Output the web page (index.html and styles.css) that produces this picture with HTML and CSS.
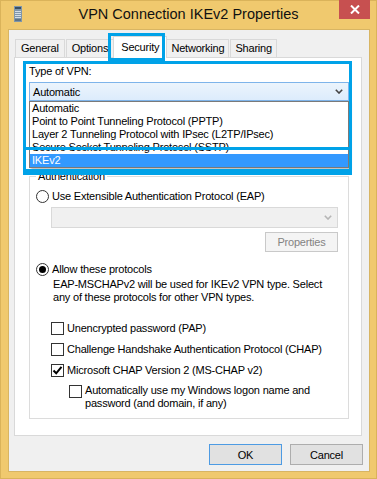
FILE: index.html
```html
<!DOCTYPE html>
<html>
<head>
  <title>VPN Connection IKEv2 Properties</title>
  <link rel="stylesheet" href="styles.css">
</head>
<body>
  <div class="window">
    <div class="titlebar">
      <svg class="app-icon" viewBox="0 0 8 16">
        <rect x="0" y="0" width="8" height="16" fill="#7f96ab"/>
        <rect x="1" y="1" width="6" height="2" fill="#3a4f63"/>
        <rect x="1" y="5" width="6" height="1" fill="#d3dde7"/>
        <rect x="1" y="7" width="6" height="1" fill="#d3dde7"/>
        <rect x="1" y="9" width="6" height="1" fill="#d3dde7"/>
        <rect x="1" y="11" width="6" height="1" fill="#d3dde7"/>
        <rect x="1" y="13" width="6" height="2" fill="#5d7388"/>
      </svg>
      <div class="title">VPN Connection IKEv2 Properties</div>
      <div class="close">
        <svg width="10" height="9" viewBox="0 0 10 9">
          <path d="M1 0.5L9 8.5M9 0.5L1 8.5" stroke="#fff" stroke-width="2"/>
        </svg>
      </div>
    </div>

    <div class="client">
      <div class="tabs">
        <div class="tab">General</div>
        <div class="tab">Options</div>
        <div class="tab active">Security</div>
        <div class="tab">Networking</div>
        <div class="tab">Sharing</div>
      </div>
      <div class="mark mark-tab"></div>

      <div class="panel">
        <div class="label">Type of VPN:</div>
        <div class="combo open">
          <span>Automatic</span>
          <svg class="chevron" width="8" height="5" viewBox="0 0 8 5">
            <path d="M0.8 0.8L4 4L7.2 0.8" fill="none" stroke="#444" stroke-width="1.6"/>
          </svg>
          <ul class="droplist">
            <li>Automatic</li>
            <li>Point to Point Tunneling Protocol (PPTP)</li>
            <li>Layer 2 Tunneling Protocol with IPsec (L2TP/IPsec)</li>
            <li>Secure Socket Tunneling Protocol (SSTP)</li>
            <li class="selected">IKEv2</li>
          </ul>
        </div>

        <fieldset class="group">
          <legend>Authentication</legend>
          <div class="group-body">
            <div class="opt">
              <span class="radio"></span>
              Use Extensible Authentication Protocol (EAP)
            </div>
            <div class="combo disabled">
              <span></span>
              <svg class="chevron" width="8" height="5" viewBox="0 0 8 5">
                <path d="M0.8 0.8L4 4L7.2 0.8" fill="none" stroke="#b5b5b5" stroke-width="1.6"/>
              </svg>
            </div>
            <div class="button disabled props">Properties</div>

            <div class="opt allow">
              <span class="radio checked"></span>
              Allow these protocols
            </div>
            <div class="note">
              EAP-MSCHAPv2 will be used for IKEv2 VPN type. Select<br>
              any of these protocols for other VPN types.
            </div>

            <div class="checks">
              <div class="opt">
                <span class="check"></span>
                Unencrypted password (PAP)
              </div>
              <div class="opt">
                <span class="check"></span>
                Challenge Handshake Authentication Protocol (CHAP)
              </div>
              <div class="opt">
                <span class="check">
                  <svg width="11" height="11" viewBox="0 0 11 11">
                    <path d="M1.5 5.5L4.2 8.3L9.5 1.8" fill="none" stroke="#000" stroke-width="2"/>
                  </svg>
                </span>
                Microsoft CHAP Version 2 (MS-CHAP v2)
              </div>
              <div class="opt sub">
                <span class="check"></span>
                <div>Automatically use my Windows logon name and<br>password (and domain, if any)</div>
              </div>
            </div>
          </div>
        </fieldset>

        <div class="mark mark-vpn"></div>
        <div class="mark mark-ikev2"></div>
      </div>

      <div class="buttons">
        <div class="button default">OK</div>
        <div class="button">Cancel</div>
      </div>
    </div>
  </div>
</body>
</html>
```

FILE: styles.css
```css
* {
  box-sizing: border-box;
}

body {
  margin: 0;
  font-family: "Liberation Sans", Arial, sans-serif;
  font-size: 11px;
  letter-spacing: -0.2px;
  color: #000;
}

.window {
  width: 377px;
  height: 479px;
  background: #f0c96e;
  border: 1px solid #dab35a;
  display: flex;
  flex-direction: column;
}

.titlebar {
  height: 28px;
  display: grid;
  grid-template-columns: 1fr auto 1fr;
  align-items: start;
}

.app-icon {
  width: 8px;
  height: 16px;
  margin: 5px 0 0 13px;
}

.title {
  font-size: 14.5px;
  letter-spacing: 0;
  line-height: 26px;
  color: #111;
}

.close {
  justify-self: end;
  width: 31px;
  height: 19px;
  margin: -1px 6px 0 0;
  background: #c75050;
  display: flex;
  align-items: center;
  justify-content: center;
}

.client {
  position: relative;
  margin: 0 6px 0 7px;
  height: 443px;
  background: #f0f0f0;
  border: 1px solid #d8b563;
  padding: 0 6px 0 5px;
}

/* tabs */
.tabs {
  display: flex;
  align-items: flex-end;
  height: 22px;
  margin: 6px 0 -1px 1px;
  position: relative;
  z-index: 1;
}

.tab {
  height: 18px;
  margin-bottom: 1px;
  padding: 0 5px;
  border: 1px solid #d9d9d9;
  border-bottom: none;
  background: #f0f0f0;
  line-height: 17px;
  margin-right: 1px;
}

.tab:nth-child(n+4) {
  padding: 0 4px;
}

.tab.active {
  height: 22px;
  margin: 0 -1px 0 -2px;
  padding: 0 7px;
  background: #fff;
  line-height: 20px;
  position: relative;
}

.panel {
  position: relative;
  width: 348px;
  height: 379px;
  background: #fff;
  border: 1px solid #d9d9d9;
  padding: 7px 12px 0 14px;
}

.label {
  line-height: 13px;
}

.combo {
  position: relative;
  display: flex;
  align-items: center;
  justify-content: space-between;
  height: 19px;
  margin-top: 4px;
  padding: 0 5px 0 3px;
  border: 1px solid #7eb4ea;
  background: linear-gradient(#ecf4fc, #dcecfc);
}

.droplist {
  position: absolute;
  left: -1px;
  right: -1px;
  top: calc(100% + 1px);
  margin: 0;
  padding: 0;
  list-style: none;
  background: #fff;
  border: 1px solid #7a7a7a;
  box-shadow: 2px 2px 2px rgba(0, 0, 0, 0.25);
}

.droplist li {
  height: 13px;
  line-height: 13px;
  padding-left: 2px;
  white-space: nowrap;
}

.droplist li.selected {
  background: #3399ff;
  color: #fff;
}

/* authentication group */
.group {
  width: 320px;
  margin: 69px 0 0;
  padding: 6px 10px 8px 6px;
  border: 1px solid #dcdcdc;
  min-width: 0;
}

.group legend {
  padding: 0 2px;
  line-height: 13px;
}

.group-body {
  display: flex;
  flex-direction: column;
}

.opt {
  display: flex;
  align-items: center;
  height: 14px;
  line-height: 13px;
  white-space: nowrap;
}

.radio {
  width: 13px;
  height: 13px;
  margin-right: 3px;
  border: 1px solid #333;
  border-radius: 50%;
  background: #fff;
  display: flex;
  align-items: center;
  justify-content: center;
  flex-shrink: 0;
}

.radio.checked::after {
  content: "";
  width: 7px;
  height: 7px;
  border-radius: 50%;
  background: #000;
}

.check {
  width: 13px;
  height: 13px;
  margin-right: 3px;
  border: 1px solid #333;
  background: #fff;
  display: flex;
  align-items: center;
  justify-content: center;
  flex-shrink: 0;
}

.combo.disabled {
  height: 21px;
  margin: 4px 0 0 15px;
  border-color: #d9d9d9;
  background: #f0f0f0;
}

.button {
  width: 73px;
  height: 21px;
  border: 1px solid #adadad;
  background: #e1e1e1;
  display: flex;
  align-items: center;
  justify-content: center;
}

.button.default {
  border-color: #4d9be3;
}

.button.disabled {
  border-color: #c9c9c9;
  background: #f4f4f4;
  color: #838383;
}

.props {
  align-self: flex-end;
  height: 20px;
  margin-top: 4px;
}

.allow {
  margin-top: 10px;
}

.note {
  margin-top: 2px;
  padding-left: 17px;
  line-height: 13px;
}

.checks {
  display: flex;
  flex-direction: column;
  gap: 7px;
  margin-top: 17px;
  padding-left: 15px;
}

.opt.sub {
  height: auto;
  align-items: flex-start;
  padding-left: 18px;
}

.opt.sub .check {
  margin-top: 1px;
}

.buttons {
  display: flex;
  justify-content: flex-end;
  gap: 8px;
  margin-top: 8px;
}

/* blue annotation boxes */
.mark {
  position: absolute;
  border: 3px solid #00a2e8;
  z-index: 2;
}

.mark-tab {
  left: 99px;
  top: 3px;
  width: 57px;
  height: 28px;
}

.mark-vpn {
  left: 8px;
  top: 3px;
  width: 329px;
  height: 114px;
}

.mark-ikev2 {
  left: 8px;
  top: 89px;
  width: 329px;
  height: 25px;
}
```
